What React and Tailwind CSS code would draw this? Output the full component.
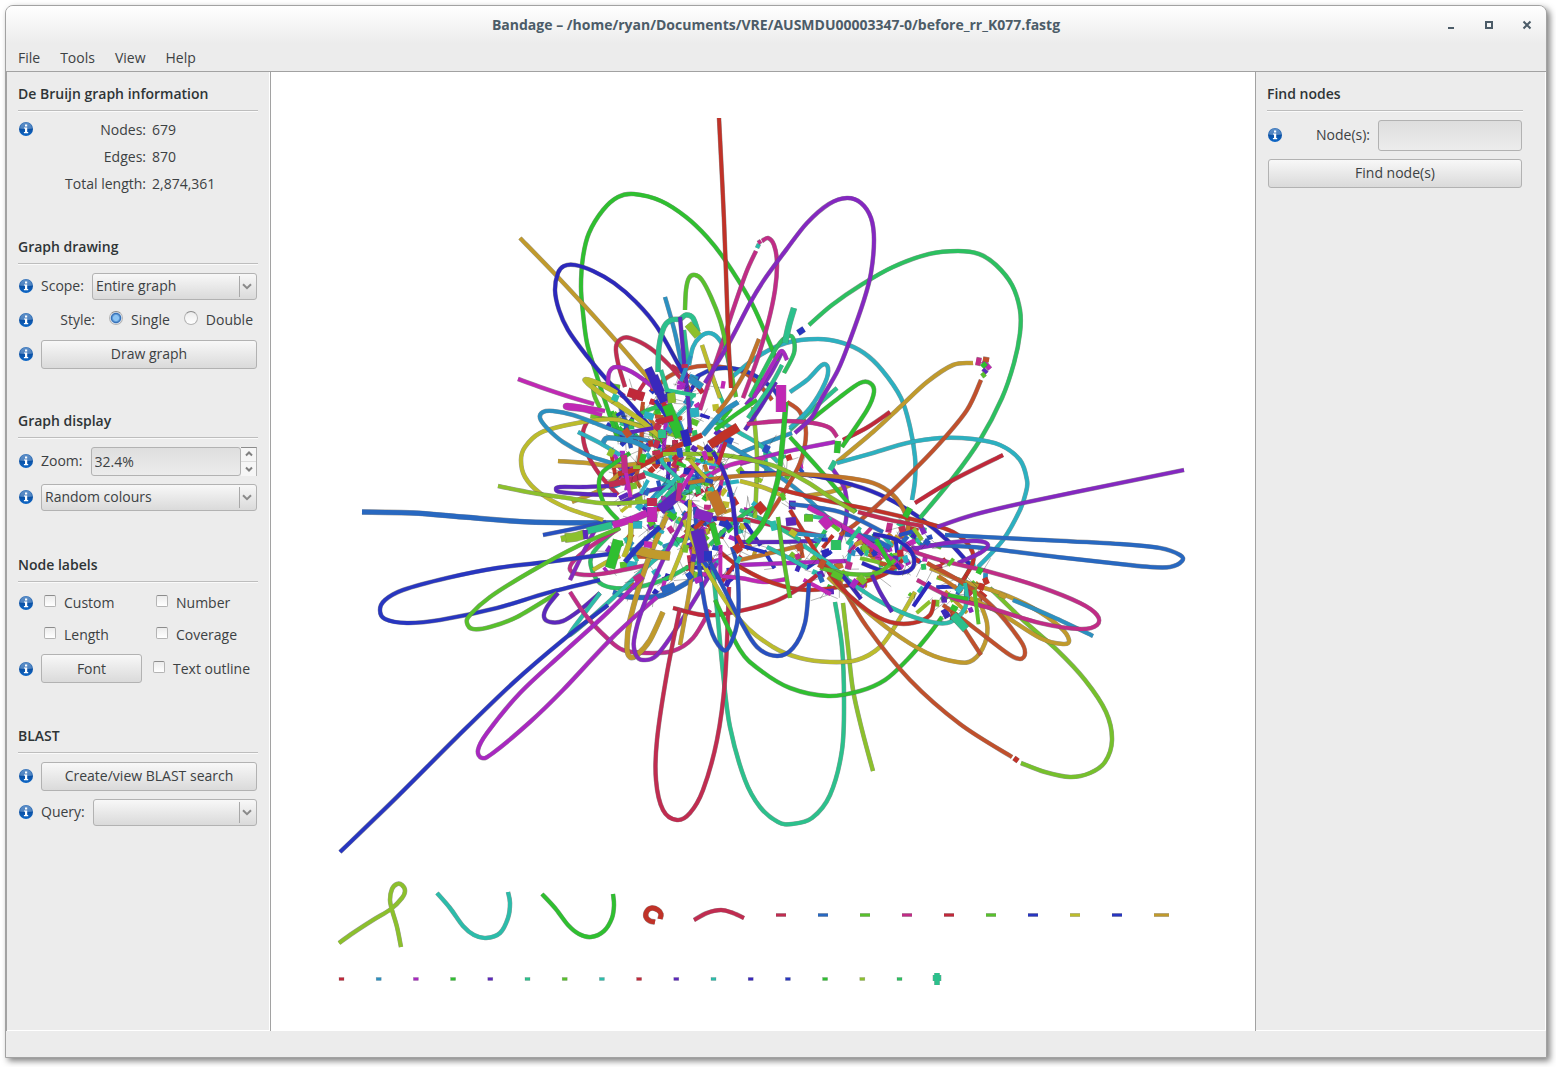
import { useState } from 'react'

const C = {
  red:     '#c03228',
  orange:  '#c0502c',
  brown:   '#c07428',
  gold:    '#c09a2c',
  olive:   '#bcbc2c',
  lime:    '#8cc02c',
  leaf:    '#76c02c',
  grass:   '#58c02c',
  green:   '#2fbf30',
  emerald: '#2cc060',
  teal:    '#2cc08c',
  aqua:    '#2cbcaa',
  cyan:    '#2cb0c0',
  sky:     '#2c90c0',
  blue:    '#2868c0',
  royal:   '#2850c0',
  navy:    '#2836c0',
  ink:     '#2c28bc',
  indigo:  '#3a28bc',
  violet:  '#5c28bc',
  purple:  '#8428c0',
  orchid:  '#a828c0',
  magenta: '#c028b4',
  pink:    '#c02c86',
  crimson: '#c02c50',
  scarlet: '#c0283a',
}

const PALETTE = Object.values(C)

// colour, thickness, points the node runs through
const BACK_NODES = [
  ['orange', 4, '654,390 668,377 689,368 711,366 743,372 764,390 772,400'],
  ['navy', 4, '696,377 711,370 729,368 750,373 771,387 778,396'],
  ['cyan', 4, '689,365 693,347 700,337 709,333 718,338 727,355 732,383'],
  ['olive', 4, '702,345 711,372 720,398'],
  ['gold', 4, '558,461 587,463 613,466 643,463 680,458'],
  ['gold', 4, '572,502 600,490 620,473'],
  ['crimson', 4, '588,420 583,433 587,453 600,475 618,495'],
  ['emerald', 4, '617,528 593,553 592,570 603,585 630,588 663,580 697,562'],
  ['pink', 4, '620,528 590,547 572,563 572,572 590,575 613,572 647,565'],
  ['blue', 5, '613,592 630,597 663,595 703,573'],
  ['purple', 4, '570,580 583,553 596,528'],
  ['olive', 4, '593,570 607,562 620,556'],
  ['violet', 4, '740,542 780,542 817,541'],
  ['orchid', 4, '740,565 790,563 847,561'],
  ['magenta', 4, '700,574 740,578 763,582 787,579'],
  ['red', 4, '720,552 740,567 773,583 807,590 850,585 883,575 903,560'],
  ['brown', 4, '740,560 775,552 803,545'],
  ['crimson', 4, '745,519 780,527 822,536'],
  ['teal', 4, '740,510 770,523 800,540'],
  ['sky', 4, '740,453 765,443 792,433'],
  ['sky', 4, '715,437 740,452 770,470 800,492 830,520'],
  ['aqua', 4, '718,420 740,433 760,445 778,462'],
  ['orange', 4, '787,402 800,412 806,433 800,463 784,492 767,518'],
  ['lime', 4, '753,407 757,457 755,518'],
  ['olive', 4, '740,481 765,488 785,497'],
  ['gold', 4, '805,496 830,492 851,485'],
  ['violet', 4, '745,430 760,408 776,382'],
  ['purple', 4, '746,405 768,378 782,352'],
  ['purple', 4, '832,468 845,490 846,520 838,545'],
  ['orchid', 4, '740,464 780,453 835,442'],
  ['teal', 4, '790,430 812,410 837,388'],
  ['green', 4, '790,437 820,470 856,512'],
  ['grass', 4, '620,387 596,384 594,394 600,408'],
  ['violet', 4, '617,505 645,492 675,486'],
  ['lime', 4, '620,420 650,428 690,440'],
  ['aqua', 4, '643,472 660,478 680,487'],
  ['orange', 4, '636,478 640,455 642,430'],
  ['royal', 4, '620,405 626,425 631,448'],
  ['sky', 5, '703,435 722,413 738,402'],
  ['magenta', 4, '700,480 730,465 765,458'],
  ['emerald', 4, '635,417 648,410 662,406'],
  ['green', 4, '715,430 735,415 757,400'],
  ['teal', 4, '660,503 672,490 684,478'],
  ['emerald', 4, '710,545 730,525 757,505'],
  ['brown', 4, '685,530 700,545 712,560'],
  ['scarlet', 4, '700,517 725,519 750,520'],
]

const NODES = [
  ['sky', 4, '665,297 675,333 684,377'],
  ['blue', 5, '362,512 413,513 463,517 530,522 620,523'],
  ['royal', 4, '543,535 583,527 606,522'],
  ['navy', 4, '617,553 547,562 497,568 447,578 403,590 385,600 380,610 385,619 407,623 440,620 497,608 547,593 600,580'],
  ['grass', 4, '620,528 580,545 530,572 490,597 470,615 467,623 473,629 490,627 517,617 557,593'],
  ['violet', 4, '558,593 547,607 544,617 550,622 563,621 580,610 600,593'],
  ['aqua', 4, '600,593 584,614 569,635 585,623 613,598 640,573 673,543'],
  ['navy', 4, '340,852 397,797 457,737 513,683 563,640 608,605'],
  ['pink', 4, '570,592 587,617 607,638 623,650 647,653 673,651 693,638 710,610'],
  ['gold', 5, '663,612 650,640 637,655 630,657 627,647 630,620 647,563 668,513'],
  ['orchid', 4, '643,577 607,613 563,653 520,693 487,733 478,750 482,758 493,753 530,722 563,690 613,637 657,597'],
  ['purple', 4, '687,513 663,560 643,607 634,640 636,655 643,660 657,655 680,623 717,563'],
  ['gold', 4, '680,645 690,587 695,540'],
  ['scarlet', 4, '673,608 703,615 730,613 773,602 800,588 817,575'],
  ['teal', 4, '713,570 718,620 723,673 730,727 745,780 760,807 778,822 792,824 812,818 830,795 842,750 844,700 842,647 835,602'],
  ['crimson', 4, '680,608 667,673 657,740 656,780 663,810 677,820 690,813 703,790 717,740 725,680 729,587'],
  ['lime', 4, '843,603 848,647 853,690 862,730 873,771'],
  ['green', 4, '715,600 740,650 760,670 790,688 828,696 860,691 885,680 907,660 927,637 942,617'],
  ['olive', 4, '684,520 705,567 740,620 773,647 800,658 830,662 857,660 880,647 897,623 915,592'],
  ['royal', 4, '700,545 717,575 740,620 757,647 777,656 793,648 805,623 809,583'],
  ['royal', 4, '695,507 700,573 710,627 722,649 730,645 738,617 737,567 732,547'],
  ['orange', 4, '825,560 840,583 867,627 910,680 960,724 1012,757'],
  ['leaf', 4, '990,588 1023,620 1057,650 1085,680 1106,712 1112,740 1105,762 1090,773 1070,777 1045,772 1021,763'],
  ['gold', 4, '828,577 850,597 890,630 927,653 957,662 973,660 985,643 987,623 978,598'],
  ['red', 4, '790,510 813,547 837,583 867,610 890,622 913,623 930,615 934,600'],
  ['gold', 4, '930,568 965,582 1000,593 1033,608 1060,627 1069,640 1063,644 1040,638 1000,613 970,598'],
  ['orange', 4, '927,563 963,583 993,607 1020,640 1025,653 1020,659 1007,653 973,627 943,605'],
  ['sky', 4, '1013,600 1053,617 1093,636'],
  ['aqua', 4, '803,545 827,562 857,587 890,607 923,620 947,623 962,613 967,600 965,583'],
  ['aqua', 4, '767,547 787,557 807,568'],
  ['ink', 4, '740,473 807,475 853,485 887,498 920,518 947,540 970,565'],
  ['brown', 4, '688,483 727,477 760,475 790,474 840,477 873,483 893,495 905,513 908,530 902,538'],
  ['red', 4, '775,488 823,500 873,510 923,522 953,532 970,547 973,562 963,580'],
  ['emerald', 4, '809,325 832,305 861,285 893,267 929,254 958,251 979,254 996,265 1012,285 1020,310 1020,333 1014,363 1002,398 980,440 953,478 920,518'],
  ['cyan', 4, '732,377 757,357 786,343 818,339 843,343 864,353 882,370 901,398 910,427 915,457 915,480 912,500'],
  ['gold', 4, '973,363 953,365 927,382 900,407 873,432 837,462'],
  ['cyan', 4, '837,463 873,453 907,443 940,438 973,439 1000,445 1020,460 1027,480 1026,492 1020,510 1003,540 978,567'],
  ['orange', 4, '981,380 967,410 940,443 907,477 863,518 840,535'],
  ['scarlet', 4, '890,412 868,427 843,440'],
  ['scarlet', 4, '1003,455 953,480 915,503'],
  ['purple', 4, '937,527 973,515 1023,503 1120,483 1184,470'],
  ['blue', 4, '945,535 1023,539 1120,544 1160,548 1180,555 1182,561 1170,567 1150,567 1120,564 1057,557 973,547 920,545'],
  ['purple', 4, '907,550 947,543 977,541 988,545 980,553 958,563'],
  ['pink', 4, '902,548 940,560 990,572 1040,587 1080,603 1097,615 1097,625 1080,629 1040,623 990,608 953,598 917,580'],
  ['blue', 4, '790,504 840,512 883,532'],
  ['blue', 5, '845,534 870,538 890,548'],
  ['magenta', 5, '808,507 857,535 903,568'],
  ['ink', 4, '873,534 897,540 912,553 913,567 900,573 880,570 862,563'],
  ['grass', 4, '820,568 850,574 877,573 895,560'],
  ['crimson', 4, '858,512 890,520 923,526'],
  ['indigo', 4, '842,575 852,587 861,599'],
  ['violet', 4, '872,575 880,592 892,612'],
  ['orange', 4, '955,615 968,635 981,655'],
  ['grass', 4, '778,517 783,555 790,598'],
  ['green', 4, '807,423 840,397 860,383 870,383 874,392 867,410 842,447'],
  ['cyan', 4, '790,392 807,380 822,365 828,368 825,383 810,408 790,428'],
  ['pink', 4, '747,424 783,421 813,423 830,428 837,437'],
  ['green', 5, '786,402 782,447 777,483 763,523 747,543'],
  ['green', 4, '777,361 764,330 750,300 725,260 707,237 686,217 661,201 634,194 618,197 603,210 589,233 583,257 581,287 583,313 587,343 595,370 604,398 618,440'],
  ['pink', 4, '756,251 746,273 732,313 721,347 708,385 700,410'],
  ['pink', 4, '762,241 768,238 774,245 777,263 775,290 768,323 757,360 743,398'],
  ['grass', 4, '685,310 686,290 689,278 695,275 702,280 711,297 720,320 725,340 730,367 736,397'],
  ['gold', 4, '520,238 554,273 582,303 618,343 655,386'],
  ['ink', 4, '683,373 657,327 636,302 614,283 593,271 575,265 564,266 558,273 555,290 559,310 568,330 586,355 607,380 625,398 660,438'],
  ['crimson', 4, '625,387 618,363 616,347 621,339 630,338 650,348 671,367 690,390'],
  ['orchid', 4, '608,390 609,373 616,367 632,372 654,388 668,402'],
  ['magenta', 4, '518,379 540,387 567,396 594,404'],
  ['olive', 4, '655,432 620,420 597,420 567,425 540,433 525,447 521,460 525,477 540,493 567,508 603,520'],
  ['sky', 4, '657,443 627,435 600,425 573,415 553,411 543,412 540,418 547,428 563,442 587,455 612,463'],
  ['cyan', 4, '578,432 600,443 620,455'],
  ['sky', 5, '603,443 607,438 620,439 637,443 650,450'],
  ['violet', 4, '617,495 583,494 560,492 556,489 560,487 583,487 613,486'],
  ['green', 4, '630,453 615,463 602,473 599,487 605,505 618,520'],
  ['lime', 4, '498,486 533,493 567,498 600,503 627,503 655,501'],
  ['olive', 5, '660,437 640,420 617,404 600,393 585,380 600,384 617,393'],
  ['magenta', 4, '602,415 583,410 567,408 567,405 583,407 605,411'],
  ['aqua', 4, '660,448 663,463 680,480'],
  ['red', 5, '702,435 680,445 657,457 633,470 618,474'],
  ['crimson', 6, '609,485 630,480 645,475'],
  ['lime', 4, '663,454 700,454 730,456 760,462 780,468 807,482 830,497 855,512'],
  ['olive', 4, '690,460 700,472 708,480'],
  ['indigo', 4, '713,452 723,470 730,490 735,520 737,545'],
  ['olive', 4, '690,500 687,535 670,580'],
  ['emerald', 4, '784,373 794,353 793,338 786,337 775,350 750,397'],
  ['orchid', 4, '787,360 782,351 775,360 754,397'],
  ['teal', 4, '782,365 771,385 748,418'],
  ['teal', 5, '658,372 659,347 664,327 671,320 680,319 686,315 693,318 698,332'],
  ['teal', 4, '684,330 688,363'],
  ['teal', 4, '661,370 670,400'],
  ['violet', 4, '680,317 684,360 688,398 690,433'],
  ['purple', 4, '705,383 729,343 750,303 764,280 786,250 807,223 829,204 847,198 861,203 871,218 874,240 871,273 864,300 850,340 838,370 822,398 812,417 795,433'],
  ['brown', 4, '759,339 746,370 729,398 717,413'],
  ['red', 4, '719,118 724,220 728,330 731,388'],
]

// short thick nodes, drawn above the long ones
const BLOCKS = [
  ['indigo', 8, '648,368 656,385 664,402'],
  ['indigo', 10, '653,376 660,393'],
  ['green', 10, '667,405 674,422 680,437'],
  ['scarlet', 9, '628,392 644,397'],
  ['magenta', 10, '781,385 781,412'],
  ['teal', 6, '794,308 789,325 785,343'],
  ['lime', 8, '688,324 698,336'],
  ['red', 9, '738,427 725,435 710,445'],
  ['brown', 11, '712,492 717,503 722,514'],
  ['crimson', 10, '652,498 652,506'],
  ['magenta', 10, '652,507 652,522'],
  ['magenta', 7, '613,525 630,520 647,513'],
  ['teal', 7, '587,531 612,525'],
  ['lime', 9, '565,538 575,537 585,534'],
  ['lime', 6, '561,539 566,538'],
  ['violet', 5, '585,530 586,539'],
  ['green', 10, '618,540 610,568'],
  ['gold', 9, '637,550 652,554 670,556'],
  ['violet', 13, '697,530 705,562'],
  ['purple', 10, '695,513 712,518'],
  ['violet', 10, '660,510 680,493'],
  ['blue', 8, '662,591 675,586'],
  ['olive', 5, '631,523 630,540 624,557'],
  ['navy', 5, '625,562 640,545 660,527'],
  ['sky', 7, '690,379 702,387'],
  ['teal', 8, '662,430 662,438'],
  ['ink', 8, '684,430 688,446'],
  ['cyan', 7, '633,525 642,525'],
  ['navy', 10, '704,556 712,556'],
  ['navy', 9, '725,527 730,523'],
  ['lime', 8, '671,393 672,403'],
  ['cyan', 9, '694,408 695,417'],
  ['scarlet', 6, '657,422 673,418'],
  ['pink', 6, '624,455 625,473'],
  ['crimson', 8, '654,443 659,445'],
  ['pink', 5, '680,483 678,501'],
  ['green', 6, '712,523 718,545'],
  ['magenta', 6, '644,544 652,545'],
  ['emerald', 10, '836,540 836,550'],
  ['magenta', 10, '822,518 830,527'],
  ['violet', 8, '786,522 796,521'],
  ['grass', 7, '804,518 813,518'],
  ['orange', 7, '798,544 801,550'],
  ['red', 9, '757,504 764,512'],
  ['olive', 6, '790,531 796,535'],
  ['green', 6, '838,441 837,453'],
  ['green', 6, '910,508 905,517'],
  ['navy', 6, '798,333 804,329'],
  ['red', 7, '735,545 740,552'],
  ['orange', 6, '824,560 820,568'],
  ['grass', 7, '832,573 842,578'],
  ['teal', 8, '953,615 966,629'],
  ['green', 4, '948,595 968,599'],
  ['cyan', 6, '957,592 962,586'],
  ['gold', 5, '999,594 1006,597'],
  ['teal', 5, '835,461 830,470'],
  ['aqua', 4, '757,248 759,244'],
  ['pink', 4, '758,243 761,241'],
  ['pink', 8, '976,361 981,362'],
  ['magenta', 5, '983,361 990,369'],
  ['green', 5, '982,367 986,363'],
  ['orange', 5, '983,359 989,360'],
  ['violet', 4, '983,369 987,373'],
  ['grass', 4, '982,373 985,377'],
  ['red', 5, '1014,758 1018,761'],
]

const LOOSE_NODES = [
  ['lime', 4, '339,943 353,933 373,920 391,909 402,898 405,891 402,885 397,884 392,889 390,900 392,910 397,927 401,947'],
  ['aqua', 4, '437,893 450,908 463,926 474,935 486,938 500,933 508,918 510,903 508,892'],
  ['green', 4, '542,894 555,908 568,925 579,934 591,937 604,931 612,918 614,905 613,894'],
  ['red', 5, '655,922 650,921 646,917 647,911 652,908 658,910 661,914 660,919'],
  ['crimson', 4, '694,920 707,913 721,910 733,913 744,918'],
  ['crimson', 3, '776,915 786,915'],
  ['blue', 3, '818,915 828,915'],
  ['grass', 3, '860,915 870,915'],
  ['pink', 3, '902,915 912,915'],
  ['scarlet', 3, '944,915 954,915'],
  ['grass', 3, '986,915 996,915'],
  ['navy', 3, '1028,915 1038,915'],
  ['olive', 3, '1070,915 1080,915'],
  ['navy', 3, '1112,915 1122,915'],
  ['gold', 3, '1154,915 1169,915'],
  ['teal', 5, '937,973 937,985'],
  ['teal', 8, '937,975 937,981'],
]

const TINY_NODES = [
  'scarlet', 'sky', 'orchid', 'green', 'violet', 'teal', 'grass', 'aqua',
  'scarlet', 'violet', 'aqua', 'indigo', 'navy', 'green', 'lime', 'emerald',
]

// tangled regions: centre, radii, count
const TANGLES = [
  { x: 640, y: 430, rx: 42, ry: 46, n: 58, seed: 7 },
  { x: 692, y: 428, rx: 42, ry: 66, n: 72, seed: 19 },
  { x: 670, y: 488, rx: 60, ry: 46, n: 115, seed: 31 },
  { x: 715, y: 540, rx: 46, ry: 46, n: 60, seed: 59 },
  { x: 770, y: 505, rx: 60, ry: 60, n: 26, seed: 43 },
  { x: 835, y: 560, rx: 46, ry: 34, n: 42, seed: 71 },
  { x: 898, y: 545, rx: 42, ry: 22, n: 55, seed: 83 },
  { x: 948, y: 588, rx: 40, ry: 30, n: 36, seed: 97 },
  { x: 645, y: 560, rx: 45, ry: 36, n: 24, seed: 101 },
]

function smooth(points) {
  const p = points.split(' ').map((s) => s.split(',').map(Number))
  let d = `M${p[0]}`
  for (let i = 0; i < p.length - 1; i++) {
    const a = p[i - 1] ?? p[i]
    const b = p[i]
    const c = p[i + 1]
    const e = p[i + 2] ?? c
    d += ` C${b[0] + (c[0] - a[0]) / 6},${b[1] + (c[1] - a[1]) / 6}`
    d += ` ${c[0] - (e[0] - b[0]) / 6},${c[1] - (e[1] - b[1]) / 6} ${c}`
  }
  return d
}

function tangle({ x, y, rx, ry, n, seed }) {
  let s = seed * 7919
  const rand = () => {
    s = (s * 1103515245 + 12345) % 2147483648
    return s / 2147483648
  }
  return Array.from({ length: n }, () => {
    const a = rand() * Math.PI * 2
    const r = Math.sqrt(rand())
    const t = rand() * Math.PI
    const long = rand() > 0.78
    const len = long ? 14 + rand() * 22 : 5 + rand() * 5
    const cx = x + Math.cos(a) * r * rx
    const cy = y + Math.sin(a) * r * ry
    return {
      color: PALETTE[Math.floor(rand() * PALETTE.length)],
      width: long ? 4 : 3.5 + rand() * 3.5,
      x1: cx - (Math.cos(t) * len) / 2,
      y1: cy - (Math.sin(t) * len) / 2,
      x2: cx + (Math.cos(t) * len) / 2,
      y2: cy + (Math.sin(t) * len) / 2,
      lx: cx + (rand() - 0.5) * 34,
      ly: cy + (rand() - 0.5) * 34,
    }
  })
}

const PIECES = TANGLES.flatMap(tangle)

function Node({ node }) {
  const [color, width, points] = node
  const d = smooth(points)
  return (
    <g>
      <path d={d} stroke="#5a5a5a" strokeOpacity="0.6" strokeWidth={width + 0.6} />
      <path d={d} stroke={C[color]} strokeWidth={width - 0.2} />
    </g>
  )
}

function Pieces({ items }) {
  return items.map((p, i) => (
    <g key={i}>
      <line x1={p.x2} y1={p.y2} x2={p.lx} y2={p.ly} stroke="#333" strokeOpacity="0.6" strokeWidth="0.6" />
      <line x1={p.x1} y1={p.y1} x2={p.x2} y2={p.y2} stroke={p.color} strokeWidth={p.width} />
    </g>
  ))
}

function GraphCanvas() {
  return (
    <svg viewBox="271 72 984 959" className="block h-full w-full" fill="none" role="img" aria-label="Assembly graph">
      <Pieces items={PIECES.filter((_, i) => i % 3 !== 0)} />
      {BACK_NODES.map((n, i) => <Node key={i} node={n} />)}
      <Pieces items={PIECES.filter((_, i) => i % 6 === 0)} />
      {NODES.map((n, i) => <Node key={i} node={n} />)}
      <Pieces items={PIECES.filter((_, i) => i % 6 === 3)} />
      {BLOCKS.map((n, i) => <Node key={i} node={n} />)}
      {LOOSE_NODES.map((n, i) => <Node key={i} node={n} />)}
      {TINY_NODES.map((c, i) => (
        <rect key={i} x={339 + i * 37.2} y="977.5" width="5" height="3" fill={C[c]} stroke="#5a5a5a" strokeOpacity="0.4" strokeWidth="0.5" />
      ))}
    </svg>
  )
}

function InfoIcon() {
  return (
    <svg viewBox="0 0 14 14" className="size-[14px] shrink-0" aria-hidden="true">
      <defs>
        <linearGradient id="info" x1="0" y1="0" x2="0" y2="1">
          <stop offset="0" stopColor="#2f6fb8" />
          <stop offset="0.45" stopColor="#1f62b0" />
          <stop offset="0.5" stopColor="#0a50a4" />
          <stop offset="1" stopColor="#0e68c8" />
        </linearGradient>
      </defs>
      <circle cx="7" cy="7" r="7" fill="url(#info)" />
      <path d="M1 6.5a6 6 0 0 1 12 0Q7 8 1 6.5z" fill="#fff" fillOpacity="0.22" />
      <path d="M6 2.4h2.200v2H6zM5 5.400h3.200v4.600H9.200v1.300H4.900V10H6V6.600H5z" fill="#fff" />
    </svg>
  )
}

function Section({ title, children }) {
  return (
    <section>
      <h2 className="h-[29px] border-b border-[#bdbdbd] text-sm leading-6 font-semibold text-[#2e3436] shadow-[0_1px_0_#fafafa]">
        {title}
      </h2>
      <div className="pt-[5px]">{children}</div>
    </section>
  )
}

function Row({ className = 'h-9', icon = true, children }) {
  return (
    <div className={`flex items-center gap-2 px-px ${className}`}>
      {icon ? <InfoIcon /> : <span className="w-[14px] shrink-0" />}
      {children}
    </div>
  )
}

function Button({ className = 'flex-1', children }) {
  return (
    <button
      type="button"
      className={`h-[29px] rounded-[3px] border border-[#b2b2b2] bg-linear-to-b from-[#f8f8f8] to-[#dadada] ${className}`}
    >
      {children}
    </button>
  )
}

function Select({ id, label, options }) {
  return (
    <div className="relative flex-1">
      <select
        id={id}
        aria-label={label}
        className="block h-[27px] w-full appearance-none rounded-[3px] border border-[#b2b2b2] bg-linear-to-b from-[#f8f8f8] to-[#dadada] px-[3px]"
      >
        {options.map((o) => <option key={o}>{o}</option>)}
      </select>
      <div className="pointer-events-none absolute inset-y-[3px] right-0 flex w-[18px] items-center justify-center border-l border-[#a8a8a8] pr-[3px]">
        <svg viewBox="0 0 10 7" className="w-[10px]" fill="none" stroke="#8a8a8a" strokeWidth="2">
          <path d="M1 1.200l4 4 4-4" />
        </svg>
      </div>
    </div>
  )
}

function Check({ label }) {
  return (
    <label className="flex items-center gap-2">
      <input
        type="checkbox"
        className="mb-1 size-3 appearance-none rounded-[2px] border border-[#b4b4b4] border-t-[#8c8c8c] bg-linear-to-b from-[#ececec] to-white checked:bg-[#4a90d9]"
      />
      {label}
    </label>
  )
}

function Radio({ label, checked, onChange }) {
  return (
    <label className="flex items-center gap-2">
      <input
        type="radio"
        name="style"
        checked={checked}
        onChange={onChange}
        className="mb-1 size-[14px] appearance-none rounded-full border border-[#b4b4b4] border-t-[#8c8c8c] bg-linear-to-b from-[#ececec] to-white checked:bg-radial checked:from-[#8cc4f4] checked:from-30% checked:via-[#2f6cb4] checked:via-55% checked:to-white checked:to-70%"
      />
      {label}
    </label>
  )
}

function LeftPanel() {
  const [style, setStyle] = useState('single')
  const [zoom, setZoom] = useState(32.4)

  return (
    <aside className="flex w-[265px] shrink-0 flex-col gap-[38px] border-x border-[#a2a2a2] pt-[10px] pr-3 pl-[11px] shadow-[inset_-1px_-1px_0_#fff]">
      <Section title="De Bruijn graph information">
        <div className="flex gap-2 px-px">
          <div className="pt-[6px]"><InfoIcon /></div>
          <dl className="grid grid-cols-[105px_auto] gap-x-[6px] leading-[27px]">
            <dt className="text-right">Nodes:</dt>
            <dd>679</dd>
            <dt className="text-right">Edges:</dt>
            <dd>870</dd>
            <dt className="text-right">Total length:</dt>
            <dd>2,874,361</dd>
          </dl>
        </div>
      </Section>

      <Section title="Graph drawing">
        <Row className="h-[34px]">
          <label htmlFor="scope">Scope:</label>
          <Select id="scope" options={['Entire graph', 'Around nodes', 'Around BLAST hits']} />
        </Row>
        <Row className="h-[34px]">
          <div className="flex flex-1 items-center justify-end gap-[14px] pr-1">
            <span>Style:</span>
            <Radio label="Single" checked={style === 'single'} onChange={() => setStyle('single')} />
            <Radio label="Double" checked={style === 'double'} onChange={() => setStyle('double')} />
          </div>
        </Row>
        <Row className="h-[34px]">
          <Button>Draw graph</Button>
        </Row>
      </Section>

      <Section title="Graph display">
        <Row>
          <label htmlFor="zoom">Zoom:</label>
          <div className="flex flex-1">
            <input
              id="zoom"
              value={`${zoom.toFixed(1)}%`}
              readOnly
              className="h-[29px] w-0 flex-1 rounded-[3px] border border-[#b2b2b2] bg-linear-to-b from-[#dedede] to-[#ececec] px-[3px]"
            />
            <div className="flex w-4 flex-col border-t border-r border-t-[#8c8c8c] border-r-[#b2b2b2] bg-[#f6f6f6]">
              <button type="button" aria-label="Zoom in" className="flex flex-1 items-center justify-center border-b border-[#dcdcdc]" onClick={() => setZoom(zoom + 1)}>
                <svg viewBox="0 0 8 6" className="w-2" fill="none" stroke="#808080" strokeWidth="2"><path d="M1 4.500l3-3 3 3" /></svg>
              </button>
              <button type="button" aria-label="Zoom out" className="flex flex-1 items-center justify-center" onClick={() => setZoom(zoom - 1)}>
                <svg viewBox="0 0 8 6" className="w-2" fill="none" stroke="#808080" strokeWidth="2"><path d="M1 1.500l3 3 3-3" /></svg>
              </button>
            </div>
          </div>
        </Row>
        <Row>
          <Select label="Colour scheme" options={['Random colours', 'Uniform colour', 'Colour by coverage']} />
        </Row>
      </Section>

      <Section title="Node labels">
        <Row className="h-8">
          <div className="grid flex-1 grid-cols-[112px_1fr] pl-[3px]">
            <Check label="Custom" />
            <Check label="Number" />
          </div>
        </Row>
        <Row className="h-8" icon={false}>
          <div className="grid flex-1 grid-cols-[112px_1fr] pl-[3px]">
            <Check label="Length" />
            <Check label="Coverage" />
          </div>
        </Row>
        <Row className="h-[35px]">
          <div className="grid flex-1 grid-cols-[112px_1fr]">
            <Button className="w-[101px]">Font</Button>
            <Check label="Text outline" />
          </div>
        </Row>
      </Section>

      <Section title="BLAST">
        <Row>
          <Button>Create/view BLAST search</Button>
        </Row>
        <Row>
          <label htmlFor="query">Query:</label>
          <Select id="query" options={['']} />
        </Row>
      </Section>
    </aside>
  )
}

function RightPanel() {
  return (
    <aside className="w-[291px] shrink-0 border-l border-[#a2a2a2] pt-[10px] pr-[23px] pl-[11px] shadow-[inset_-1px_-1px_0_#fff]">
      <Section title="Find nodes">
        <Row className="h-[38px]">
          <label htmlFor="nodes" className="flex-1 text-right">Node(s):</label>
          <input
            id="nodes"
            className="h-[31px] w-36 rounded-[3px] border border-[#b2b2b2] bg-linear-to-b from-[#dedede] to-[#ececec] px-1"
          />
        </Row>
        <div className="flex h-[38px] items-center px-px">
          <Button>Find node(s)</Button>
        </div>
      </Section>
    </aside>
  )
}

function TitleBar() {
  return (
    <header className="grid h-[38px] grid-cols-[1fr_auto_1fr] items-center bg-linear-to-b from-white to-[#ececec] text-[#4c5c68]">
      <h1 className="col-start-2 text-sm font-bold">
        Bandage – /home/ryan/Documents/VRE/AUSMDU00003347-0/before_rr_K077.fastg
      </h1>
      <div className="flex justify-end">
        <button type="button" aria-label="Minimise" className="flex h-[38px] w-[38px] items-center justify-center">
          <svg viewBox="0 0 10 10" className="size-[10px]" fill="currentColor"><path d="M2 7h6v2H2z" /></svg>
        </button>
        <button type="button" aria-label="Maximise" className="flex h-[38px] w-[38px] items-center justify-center">
          <svg viewBox="0 0 10 10" className="size-[10px]" fill="none" stroke="currentColor" strokeWidth="2"><path d="M2 2h6v6H2z" /></svg>
        </button>
        <button type="button" aria-label="Close" className="flex h-[38px] w-[38px] items-center justify-center">
          <svg viewBox="0 0 10 10" className="size-[10px]" fill="none" stroke="currentColor" strokeWidth="2"><path d="M1.500 1.500l7 7M8.500 1.500l-7 7" /></svg>
        </button>
      </div>
    </header>
  )
}

export default function App() {
  return (
    <div className="h-screen bg-white pt-[5px] pr-[9px] pb-[9px] pl-[5px] font-['Open_Sans','Noto_Sans',sans-serif] text-sm text-[#3c4143]">
      <div className="flex h-full flex-col overflow-hidden rounded-t-lg border border-[#a2a2a2] bg-[#ececec] shadow-[3px_3px_6px_rgba(0,0,0,0.5)]">
        <TitleBar />
        <nav className="flex h-7 items-center gap-5 border-b border-[#a2a2a2] px-3">
          <button type="button">File</button>
          <button type="button">Tools</button>
          <button type="button">View</button>
          <button type="button">Help</button>
        </nav>
        <div className="flex min-h-0 flex-1">
          <LeftPanel />
          <main className="min-w-0 flex-1 bg-white">
            <GraphCanvas />
          </main>
          <RightPanel />
        </div>
        <footer className="h-[26px] shrink-0" />
      </div>
    </div>
  )
}
